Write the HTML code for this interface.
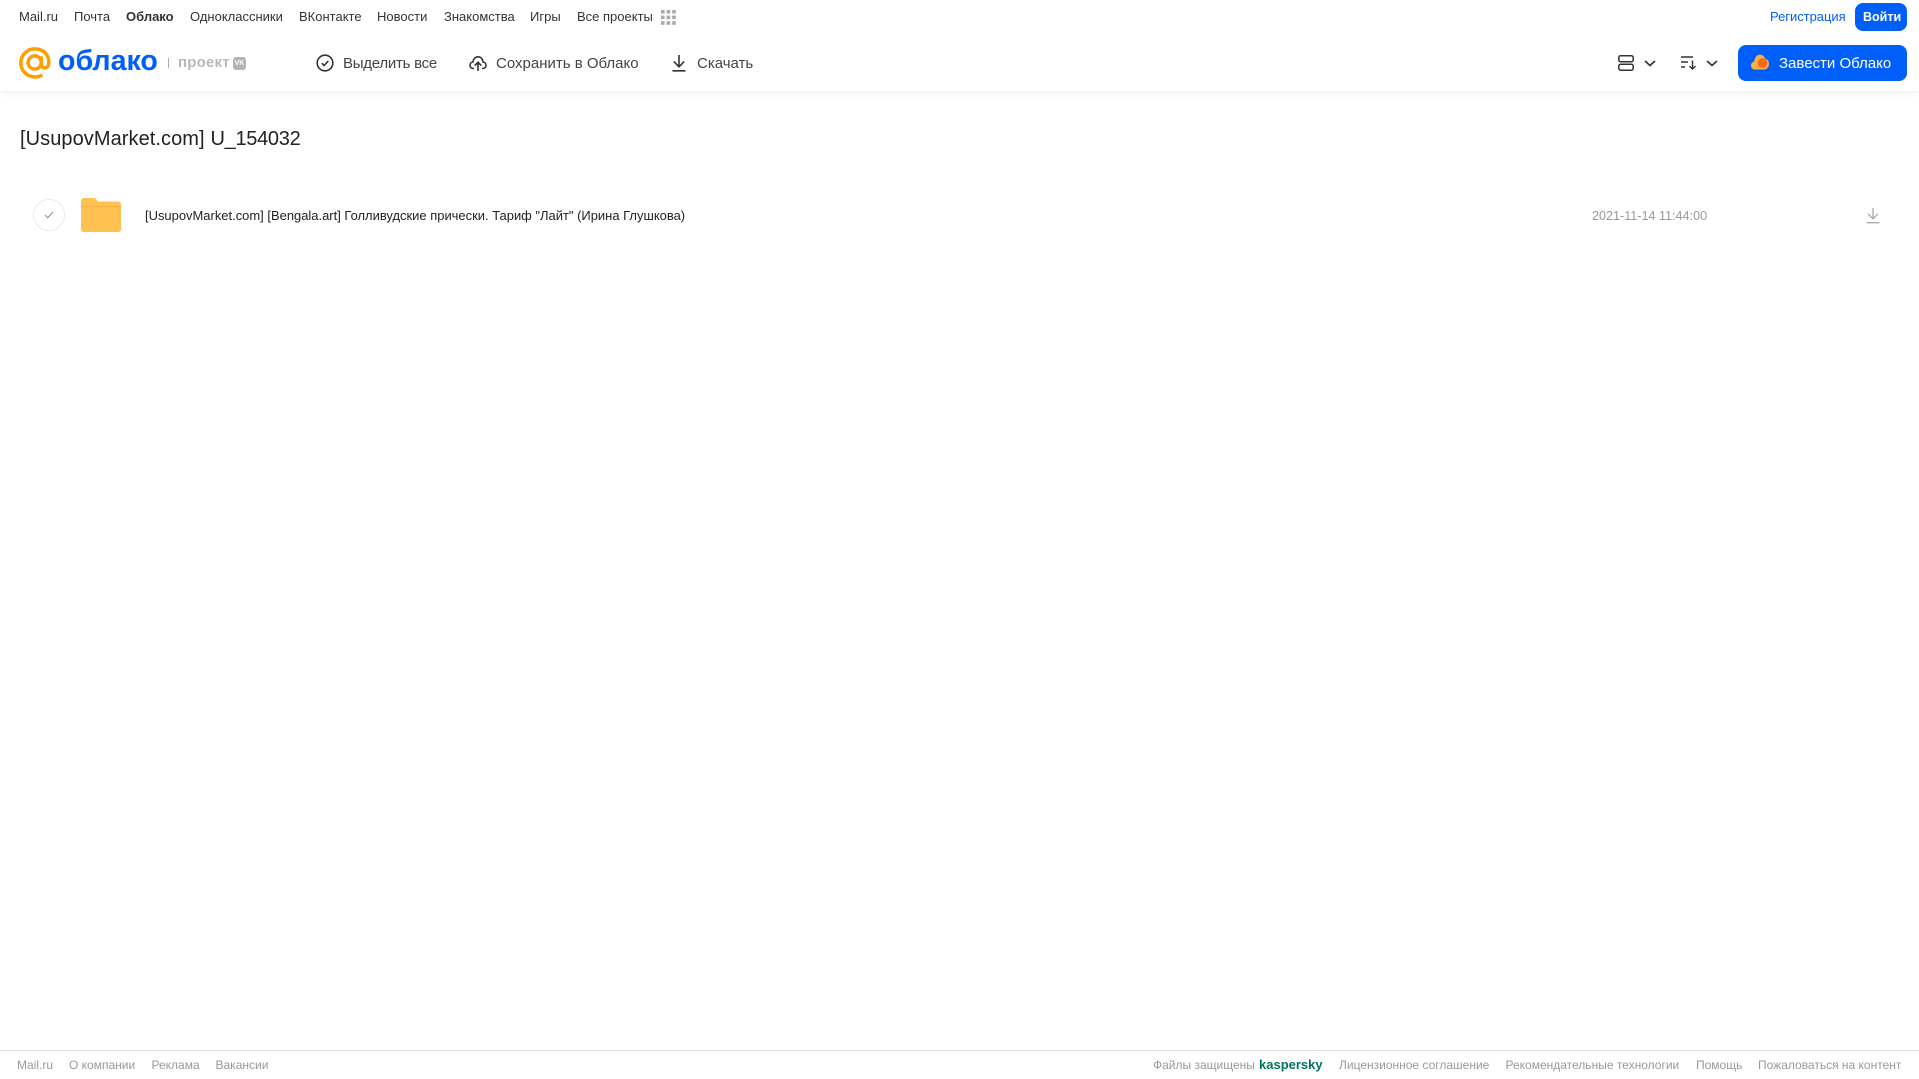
<!DOCTYPE html>
<html lang="ru"><head><meta charset="utf-8"><title>Облако</title>
<style>
html,body{margin:0;padding:0;background:#fff;width:1919px;height:1079px;overflow:hidden;font-family:"Liberation Sans",sans-serif}
.t{position:absolute;white-space:nowrap;line-height:20px;height:20px}
.n{font-size:13px;color:#333;top:7px}
.b{font-size:15px;color:#444;top:54px}
.f{font-size:12px;color:#999;top:1055px}
svg{position:absolute;overflow:visible}
#hd{position:absolute;left:0;top:0;width:1919px;height:91px;background:#fff;box-shadow:0 1px 8px rgba(0,0,0,.08)}
</style></head><body>
<div id="hd"></div>
<span class="t n" style="left:19px">Mail.ru</span>
<span class="t n" style="left:74px">Почта</span>
<span class="t n" style="left:126px;font-weight:bold">Облако</span>
<span class="t n" style="left:190px">Одноклассники</span>
<span class="t n" style="left:299px">ВКонтакте</span>
<span class="t n" style="left:377px">Новости</span>
<span class="t n" style="left:444px">Знакомства</span>
<span class="t n" style="left:530px">Игры</span>
<span class="t n" style="left:577px">Все проекты</span>
<svg style="left:661px;top:10px" width="15" height="15" fill="#aaa"><rect x="0" y="0" width="3.6" height="3.6"/><rect x="5.6" y="0" width="3.6" height="3.6"/><rect x="11.2" y="0" width="3.6" height="3.6"/><rect x="0" y="5.6" width="3.6" height="3.6"/><rect x="5.6" y="5.6" width="3.6" height="3.6"/><rect x="11.2" y="5.6" width="3.6" height="3.6"/><rect x="0" y="11.2" width="3.6" height="3.6"/><rect x="5.6" y="11.2" width="3.6" height="3.6"/><rect x="11.2" y="11.2" width="3.6" height="3.6"/></svg>
<span class="t n" style="left:1770px;color:#005ff9;letter-spacing:-.03px">Регистрация</span>
<div style="position:absolute;left:1855px;top:3px;width:52px;height:28px;border-radius:8px;background:#005ff9"></div>
<span class="t n" style="left:1863px;color:#fff;font-weight:bold;font-size:12.5px">Войти</span>

<svg style="left:19px;top:47px" width="32" height="32" viewBox="0 0 33 33" fill="none" stroke="#ff9e00" stroke-width="3.6"><circle cx="16.2" cy="16" r="6.8"/><path d="M23 9.5V18c0 5 7.6 5 7.8-1.6C31 7.500 24.500 1.900 16.400 1.900 8.200 1.900 1.900 8.400 1.900 16.400c0 8.200 6.500 14.500 14.500 14.500 3 0 5.500-.7 7.600-2"/></svg>
<span class="t" style="left:58px;top:45px;height:32px;line-height:32px;font-size:28.600px;font-weight:bold;color:#005ff9">облако</span>
<div style="position:absolute;left:168px;top:58px;width:1px;height:10px;background:#aaa"></div>
<span class="t" style="left:178px;top:53px;font-size:15px;font-weight:bold;color:#b8b8b8;letter-spacing:.2px">проект</span>
<div style="position:absolute;left:233px;top:57px;width:13px;height:13px;border-radius:3px;background:#b4b4b4;color:#fff;font:bold 7px/13px 'Liberation Sans',sans-serif;text-align:center">VK</div>

<svg style="left:316px;top:54px" width="18" height="18" viewBox="0 0 18 18" fill="none" stroke="#333" stroke-width="1.6"><circle cx="9" cy="9" r="7.800"/><path d="M5.800 9.200l2.300 2.300 4.200-4.500"/></svg>
<span class="t b" style="left:343px;letter-spacing:-.25px">Выделить все</span>
<svg style="left:469px;top:54px" width="18" height="18" viewBox="0 0 18 18" fill="none" stroke="#333" stroke-width="1.600"><path d="M5 14.500H4.300C2.300 14.500 1 13 1 11.200c0-1.700 1.300-3 2.900-3.200C4.200 5 6.300 2.800 9 2.800c2.700 0 4.800 2.100 5.100 5.200 1.600.2 2.900 1.500 2.900 3.200 0 1.800-1.300 3.300-3.300 3.300H13"/><path d="M9 17V8.500M5.800 11.500L9 8.300l3.200 3.200"/></svg>
<span class="t b" style="left:496px">Сохранить в Облако</span>
<svg style="left:672px;top:54px" width="14" height="18" viewBox="0 0 14 18" fill="none" stroke="#333" stroke-width="1.600"><path d="M7 1v11.500M1.800 7.500L7 12.800l5.200-5.300M.5 16.800h13"/></svg>
<span class="t b" style="left:697px">Скачать</span>

<svg style="left:1618px;top:55px" width="16" height="16" viewBox="0 0 16 16" fill="none" stroke="#333" stroke-width="1.500"><rect x=".8" y=".8" width="14.400" height="6" rx="1.800"/><rect x=".8" y="9.200" width="14.400" height="6" rx="1.800"/></svg>
<svg style="left:1644px;top:60px" width="12" height="7" viewBox="0 0 12 7" fill="none" stroke="#333" stroke-width="1.700"><path d="M1 1l5 4.500L11 1"/></svg>
<svg style="left:1681px;top:56px" width="16" height="14" viewBox="0 0 16 14" fill="none" stroke="#333" stroke-width="1.400"><path d="M0 1h12M0 6h7M0 11h4M11.500 4.500v8.500M8.500 10l3 3 3-3"/></svg>
<svg style="left:1706px;top:60px" width="12" height="7" viewBox="0 0 12 7" fill="none" stroke="#333" stroke-width="1.700"><path d="M1 1l5 4.500L11 1"/></svg>
<div style="position:absolute;left:1738px;top:45px;width:169px;height:36px;border-radius:8px;background:#005ff9"></div>
<svg style="left:1751px;top:54px" width="18" height="16" viewBox="0 0 18 16"><path d="M4 15.500C1.800 15.500 0 13.800 0 11.500c0-2 1.400-3.600 3.200-3.900C3.600 3.500 6 .6 9 .6c2.400 0 4.500 1.800 5.300 4.300 2.100.3 3.700 2.200 3.700 4.900 0 3.200-2.200 5.700-5 5.700z" fill="#ffb040"/><circle cx="11.500" cy="9" r="4.800" fill="#f2691e"/></svg>
<span class="t b" style="left:1779px;color:#fff">Завести Облако</span>

<span class="t" style="left:20px;top:126px;height:26px;line-height:26px;font-size:20px;color:#222;letter-spacing:.07px">[UsupovMarket.com]</span>
<span class="t" style="left:210.500px;top:126px;height:26px;line-height:26px;font-size:20px;color:#222;letter-spacing:-.3px">U_154032</span>

<div style="position:absolute;left:33px;top:199px;width:30px;height:30px;border:1px solid #ebebeb;border-radius:50%"></div>
<svg style="left:44px;top:211px" width="10" height="8" viewBox="0 0 10 8" fill="none" stroke="#999" stroke-width="1.200"><path d="M1 4.200l2.700 2.600L9 1"/></svg>
<svg style="left:81px;top:198px" width="40" height="34" viewBox="0 0 40 34"><path d="M0 3C0 1.300 1.300 0 3 0h10c1.500 0 2.300.8 3 2.500l.5 1H37c1.700 0 3 1.300 3 3V31c0 1.700-1.300 3-3 3H3c-1.700 0-3-1.300-3-3z" fill="#ffc14f"/><path d="M0 8h40v1H0z" fill="#f5b23d"/></svg>
<span class="t" style="left:145px;top:206px;font-size:12.960px;color:#222">[UsupovMarket.com] [Bengala.art] Голливудские прически. Тариф "Лайт" (Ирина Глушкова)</span>
<span class="t" style="left:1592px;top:206px;font-size:12.600px;color:#999">2021-11-14 11:44:00</span>
<svg style="left:1866px;top:207px" width="14" height="17" viewBox="0 0 14 17" fill="none" stroke="#aaa" stroke-width="1.300"><path d="M7 1v10.500M2 6.800l5 5 5-5M.5 15.700h13"/></svg>

<div style="position:absolute;left:0;top:1050px;width:1919px;height:1px;background:#ddd"></div>
<span class="t f" style="left:17px">Mail.ru</span>
<span class="t f" style="left:69px">О компании</span>
<span class="t f" style="left:151.500px">Реклама</span>
<span class="t f" style="left:215.500px">Вакансии</span>
<span class="t f" style="left:1153px">Файлы защищены</span>
<span class="t f" style="left:1259px;font-weight:bold;font-size:13px;color:#00755f">kaspersky</span>
<span class="t f" style="left:1339px">Лицензионное соглашение</span>
<span class="t f" style="left:1505.500px">Рекомендательные технологии</span>
<span class="t f" style="left:1696px">Помощь</span>
<span class="t f" style="left:1758px">Пожаловаться на контент</span>
</body></html>
